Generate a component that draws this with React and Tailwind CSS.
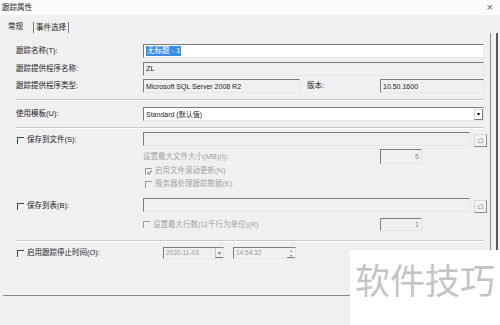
import React from 'react';

const Check = ({ checked, muted }) => (
  <span
    className={`relative inline-block w-[7px] h-[7px] shrink-0 border-t border-l ${
      muted ? 'border-[#9a9a9a]' : 'border-[#444]'
    }`}
  >
    {checked && (
      <svg viewBox="0 0 8 8" className="absolute left-0 top-0 w-[7px] h-[7px]">
        <path d="M1.5 4 L3.2 5.8 L6.5 1.8" fill="none" stroke="#8a8a8a" strokeWidth="1.4" />
      </svg>
    )}
  </span>
);

const Field = ({ className = '', children }) => (
  <div
    className={`flex items-center border border-[#e6e6e6] border-t-[#7d7d7d] border-l-[#7d7d7d] px-[2px] ${className}`}
  >
    {children}
  </div>
);

const BrowseButton = () => (
  <div className="ml-[4px] w-[13px] h-[13px] mt-[2px] flex items-center justify-center border border-[#d8d8d8] border-r-[#8a8a8a] border-b-[#8a8a8a] bg-[#f2f2f2]">
    <svg viewBox="0 0 8 8" className="w-[7px] h-[7px]">
      <path d="M1 6.5 H7 M1.5 6.5 V3 H3 L3.6 2 H6.5 V6.5" fill="none" stroke="#a0a0a0" strokeWidth="0.8" />
    </svg>
  </div>
);

const Separator = ({ className = '' }) => (
  <div className={`ml-[13px] mr-[6px] h-[2px] border-t border-[#c9c9c9] border-b-white border-b ${className}`} />
);

export default function App() {
  return (
    <div className="relative w-[500px] h-[325px] overflow-hidden bg-[#f0f0f0] text-[7.5px] leading-none text-[#1c1c1c] font-['Liberation_Sans','Noto_Sans_CJK_SC',sans-serif]">
      {/* Title bar */}
      <div className="h-[15px] bg-[#fbfbfb] flex items-center justify-between pl-[2px] pr-[7px]">
        <span className="text-[7.5px]">跟踪属性</span>
        <span className="text-[11px] text-[#666] font-light">×</span>
      </div>

      {/* Tabs */}
      <div className="h-[18px] flex items-end pl-[8px]">
        <div className="h-[12px] w-[25px] flex items-center">常规</div>
        <div className="h-[11px] w-[36px] flex items-center justify-center border-l border-r border-[#7a7a7a]">
          事件选择
        </div>
      </div>

      {/* Panel */}
      <div className="flex">
        <div className="ml-[3px] w-[488px] h-[263px] border-r border-b border-[#8a8a8a] flex flex-col">
          {/* name */}
          <div className="mt-[11px] flex h-[14px]">
            <div className="w-[140px] pl-[13px] flex items-center">跟踪名称(T):</div>
            <Field className="flex-1 mr-[6px] bg-white">
              <span className="bg-[#3a8ee6] text-white px-[1px] py-[1px]">无标题 - 1</span>
            </Field>
          </div>

          {/* provider name */}
          <div className="mt-[4px] flex h-[14px]">
            <div className="w-[140px] pl-[13px] flex items-center">跟踪提供程序名称:</div>
            <Field className="flex-1 mr-[6px]">ZL</Field>
          </div>

          {/* provider type */}
          <div className="mt-[3px] flex h-[14px]">
            <div className="w-[140px] pl-[13px] flex items-center">跟踪提供程序类型:</div>
            <Field className="w-[157px] text-[7px]">Microsoft SQL Server 2008 R2</Field>
            <div className="w-[80px] pl-[7px] flex items-center">版本:</div>
            <Field className="flex-1 mr-[6px] text-[7px]">10.50.1600</Field>
          </div>

          <Separator className="mt-[6px]" />

          {/* template */}
          <div className="mt-[6px] flex h-[14px]">
            <div className="w-[140px] pl-[13px] flex items-center">使用模板(U):</div>
            <Field className="flex-1 mr-[6px] bg-white justify-between pr-0 text-[7px]">
              <span>Standard (默认值)</span>
              <span className="w-[9px] h-[11px] flex items-center justify-center border border-[#dcdcdc] border-r-[#777] border-b-[#777] text-[6px] text-black">
                ▾
              </span>
            </Field>
          </div>

          <Separator className="mt-[6px]" />

          {/* save to file */}
          <div className="mt-[3px] flex h-[16px]">
            <div className="w-[140px] pl-[14px] flex items-center gap-[3px]">
              <Check />
              <span>保存到文件(S):</span>
            </div>
            <Field className="flex-1 h-[14px]" />
            <div className="mr-[3px]">
              <BrowseButton />
            </div>
          </div>

          <div className="mt-[1px] flex h-[15px] text-[#a3a3a3]">
            <div className="w-[140px]" />
            <div className="w-[237px] flex items-center">设置最大文件大小(MB)(I):</div>
            <Field className="w-[42px] justify-end text-[7px] text-[#888]">5</Field>
          </div>

          <div className="mt-[1px] flex h-[12px] text-[#a3a3a3]">
            <div className="w-[142px]" />
            <div className="flex items-center gap-[3px]">
              <Check checked muted />
              <span>启用文件滚动更新(N)</span>
            </div>
          </div>

          <div className="mt-[1px] flex h-[12px] text-[#a3a3a3]">
            <div className="w-[142px]" />
            <div className="flex items-center gap-[3px]">
              <Check muted />
              <span>服务器处理跟踪数据(E)</span>
            </div>
          </div>

          {/* save to table */}
          <div className="mt-[8px] flex h-[16px]">
            <div className="w-[140px] pl-[14px] flex items-center gap-[3px]">
              <Check />
              <span>保存到表(B):</span>
            </div>
            <Field className="flex-1 h-[14px]" />
            <div className="mr-[3px]">
              <BrowseButton />
            </div>
          </div>

          <div className="mt-[4px] flex h-[13px] text-[#a3a3a3]">
            <div className="w-[140px]" />
            <div className="w-[237px] flex items-center gap-[3px]">
              <Check muted />
              <span>设置最大行数(以千行为单位)(R)</span>
            </div>
            <Field className="w-[42px] justify-end text-[7px] text-[#888]">1</Field>
          </div>

          <Separator className="mt-[9px]" />

          {/* stop time */}
          <div className="mt-[5px] flex h-[12px]">
            <div className="w-[160px] pl-[14px] flex items-center gap-[3px]">
              <Check />
              <span>启用跟踪停止时间(O):</span>
            </div>
            <Field className="w-[61px] justify-between pr-0 text-[6.5px] text-[#9a9a9a]">
              <span>2020-11-03</span>
              <span className="w-[8px] h-[10px] flex items-center justify-center border-l border-[#c4c4c4] border-b border-b-[#777] text-[6px] text-[#777]">
                ▾
              </span>
            </Field>
            <Field className="ml-[9px] w-[63px] justify-between pr-0 text-[6.5px] text-[#9a9a9a]">
              <span>14:54:32</span>
              <span className="w-[8px] h-[10px] flex flex-col items-center justify-center border-b border-[#888] text-[4px] leading-[5px] text-[#777]">
                <span>▴</span>
                <span>▾</span>
              </span>
            </Field>
          </div>
        </div>
        <div className="ml-[5px] w-[2px] h-[292px] bg-[#5a5a5a]" />
      </div>

      {/* Bottom buttons */}
      <div className="flex pl-[330px] pt-[3px]">
        <div className="w-[60px] h-[20px] border border-[#7a7a7a] flex items-center pl-[13px] text-[#333]">
          确定
        </div>
      </div>

      {/* Watermark */}
      <div className="absolute left-[350px] top-[250px] w-[150px] h-[75px] bg-white flex items-start justify-center pt-[11px]">
        <span className="text-[35px] leading-none text-[#c4c4c4] font-['Noto_Sans_CJK_SC',sans-serif]">
          软件技巧
        </span>
      </div>
    </div>
  );
}
